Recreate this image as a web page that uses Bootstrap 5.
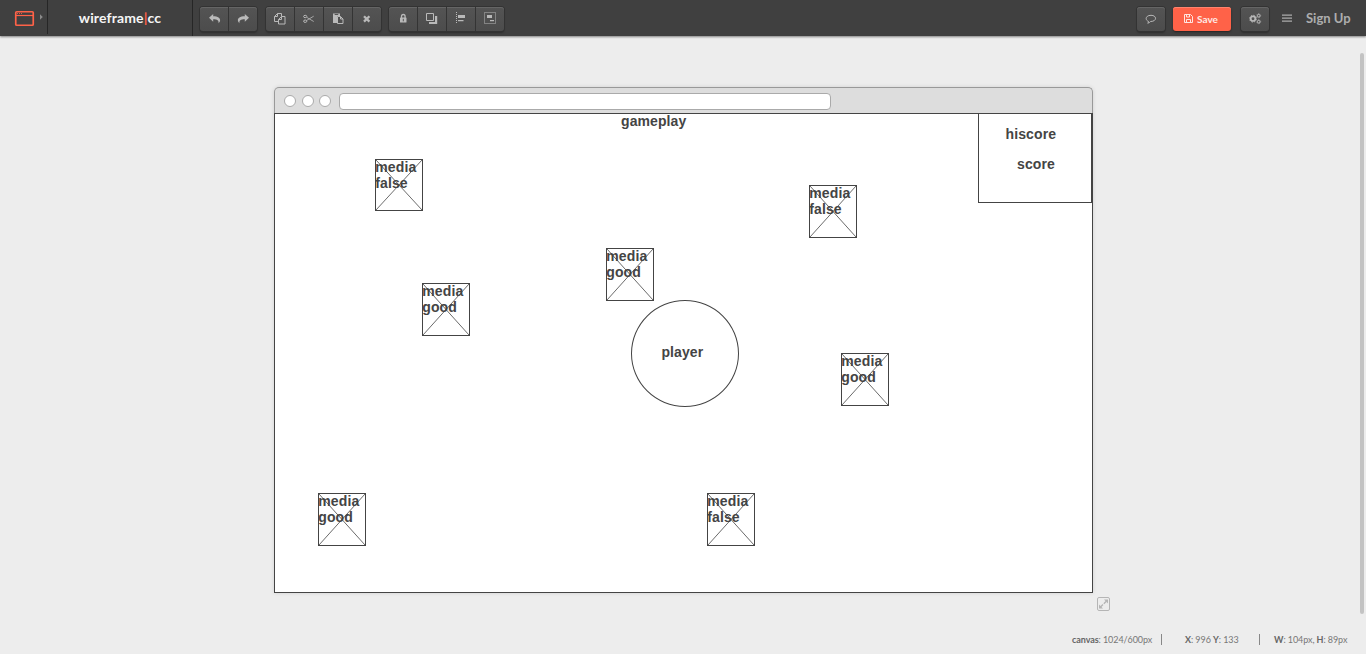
<!DOCTYPE html>
<html lang="en">
<head>
<meta charset="utf-8">
<meta name="viewport" content="width=device-width, initial-scale=1">
<title>wireframe|cc</title>
<link href="https://cdn.jsdelivr.net/npm/bootstrap@5.3.0/dist/css/bootstrap.min.css" rel="stylesheet">
<style>
body{height:654px;background:#ededed;font-family:Lato,sans-serif;overflow:hidden}
.topbar{height:36px;background:#404040;box-shadow:0 1px 2px rgba(0,0,0,.45);flex:none}
.app-menu{width:48px;border-right:1px solid #262626;height:34px}
.brandname{width:145px;height:36px;border-right:1px solid #262626;color:#f5f5f5;font-weight:700;font-size:14px;letter-spacing:.15px;line-height:36px}
.brandname i{color:#ff6248;font-style:normal}
.tools{margin-top:7px;height:24px}
.tools .btn-group{box-shadow:0 0 0 1px #333,0 2px 2px rgba(0,0,0,.3);border-radius:3px;height:24px}
.tool{width:28px;height:24px;padding:0;border:0;background:linear-gradient(#545454,#4c4c4c);box-shadow:inset 0 1px #656565;border-radius:3px;display:block;color:#b9b9b9;line-height:0}
.btn-group>.btn.tool:not(:first-child){margin-left:1px;box-shadow:-1px 0 #343434,inset 0 1px #656565}
.btn-group>.btn.tool{flex:none}
.tool svg,.save svg{display:block}
.solo{box-shadow:0 0 0 1px #333,0 2px 2px rgba(0,0,0,.3),inset 0 1px #656565}
.save{width:58px;height:24px;padding:0;border:0;border-radius:3px;background:#ff6248;color:#ffe9e5;font-size:10px;font-weight:700;box-shadow:0 1px 2px #222,inset 0 1px #ff836e;line-height:25px}
.save:hover{background:#ff6248;color:#fff}
.signup{width:44px;white-space:nowrap;color:#adadad;font-size:13px;font-weight:700;line-height:36px;text-decoration:none}
.window-frame{width:819px;margin:51px 0 0 274px;box-shadow:0 0 4px rgba(0,0,0,.12);border-radius:5px 5px 0 0}
.window-head{height:26px;background:#ddd;border:1px solid #999;border-bottom:0;border-radius:5px 5px 0 0;padding-left:9px}
.dot{width:12px;height:12px;border:1px solid #aaa;border-radius:50%;background:#fff;margin-right:5.5px;margin-top:1px}
.address{width:492px;height:17px;border:1px solid #aaa;border-radius:4px;background:#fff;margin-left:2px;margin-top:2px}
.sheet{height:480px;background:#fff;border:1px solid #444;font:bold 14px/16px "Liberation Sans",Arial,sans-serif;letter-spacing:.1px;color:#444}
.sheet>*{position:absolute}
.media-box{width:48px;height:53px;border:1px solid #444}
.media-box svg{position:absolute;left:0;top:0;width:100%;height:100%}
.media-box span{position:absolute;left:-.7px;top:-1px}
.player{width:108px;height:107px;border:1px solid #444;border-radius:50%}
.panel{width:114px;height:90px;border:1px solid #444}
.resize{position:absolute;left:1097px;top:597px}
.scroller{position:absolute;left:1360px;top:53px;width:4px;height:561px;background:#c3c3c3;border-radius:2px}
.status{height:12px;margin:auto 20px 8px auto;font-size:9px;letter-spacing:-.08px;line-height:12px;color:#777}
.status b{font-weight:700;color:#666}
.status div+div{border-left:1px solid #888;height:11px;line-height:12px}
</style>
</head>
<body class="d-flex flex-column position-relative">
<nav class="topbar d-flex">
  <div class="app-menu">
    <svg width="47" height="34" fill="none" stroke="#ff6248"><rect x="15.75" y="11.75" width="17.5" height="13.5" rx="1" stroke-width="1.7"/><path d="M15 15.500H34" stroke-width="1.2"/><path d="M17 13.500h1m1 0h1m1 0h1" stroke-width="1" opacity=".8"/><path d="M40 14.300v5.400l2.800-2.700z" fill="#8a8a8a" stroke="none"/></svg>
  </div>
  <div class="brandname text-center">wireframe<i>|</i>cc</div>
  <div class="tools d-flex" style="margin-left:7px">
    <div class="btn-group">
      <button class="btn tool" aria-label="Undo"><svg width="28" height="24" fill="currentColor"><path d="M9 10.800 13.200 7v2.300c4.800 0 7.200 1.900 6.900 4.300-.1 1-.7 1.900-1.600 2.600.5-2.700-1.100-3.900-5.300-3.900v2.400z"/></svg></button>
      <button class="btn tool" aria-label="Redo"><svg width="28" height="24" fill="currentColor"><path d="M20 10.800 15.800 7v2.300C11 9.300 8.600 11.200 8.900 13.600c.1 1 .7 1.900 1.600 2.600-.5-2.700 1.100-3.900 5.300-3.900v2.400z"/></svg></button>
    </div>
    <div class="btn-group" style="margin-left:9px">
      <button class="btn tool" aria-label="Copy"><svg width="28" height="24" fill="none" stroke="currentColor"><path d="M13 14.500H8.500V9.500l3-3H15.500V9M11.500 6.500v3h-3M15.500 9.500h3.500v7.500h-6.500v-4.500zM15.500 9.500v3h-3"/></svg></button>
      <button class="btn tool" aria-label="Cut"><svg width="28" height="24" fill="none" stroke="currentColor"><ellipse cx="10.200" cy="9.500" rx="1.600" ry="1.200"/><ellipse cx="10.200" cy="14.200" rx="1.600" ry="1.200"/><path d="m11.700 10.300 7 4.200M11.700 13.400l7-4.200" stroke-width="1" opacity=".8"/></svg></button>
      <button class="btn tool" aria-label="Paste"><svg width="28" height="24"><path d="M9 6.500h7v2.500h-3v7H9z" fill="currentColor"/><path d="M10.700 7.500h3.500" stroke="#555"/><path d="M13.500 9.500h3l2.500 2.500v4.500h-5.500zM16.500 9.500V12H19" fill="none" stroke="currentColor"/></svg></button>
      <button class="btn tool" aria-label="Delete"><svg width="28" height="24"><path d="m11 9.200 5.400 5.400M16.400 9.200 11 14.600" stroke="currentColor" stroke-width="2.300"/></svg></button>
    </div>
    <div class="btn-group" style="margin-left:8px">
      <button class="btn tool" aria-label="Lock"><svg width="28" height="24"><path d="M12.500 11V9.500a1.800 2 0 0 1 3.600 0V11" fill="none" stroke="currentColor" stroke-width="1.300"/><rect x="11" y="10.500" width="6.500" height="5" rx=".6" fill="currentColor"/><path d="M14.300 11.800v2.500" stroke="#555"/></svg></button>
      <button class="btn tool" aria-label="Arrange"><svg width="28" height="24"><path d="M8.500 6.500h7v7h-7z" fill="none" stroke="currentColor"/><path d="M17 9h2.200v8H11v-2h6z" fill="currentColor"/></svg></button>
      <button class="btn tool" aria-label="Align"><svg width="28" height="24"><path d="M9.500 5v12" stroke="currentColor" stroke-dasharray="1 1"/><path d="M11 8h7v3h-7zM11 13h5.500v1.200H11z" fill="currentColor"/></svg></button>
      <button class="btn tool" aria-label="Group"><svg width="28" height="24"><rect x="8.500" y="5.500" width="11" height="11" fill="none" stroke="currentColor" stroke-dasharray="1 1"/><path d="M11 8h5v3h-5zM14 13h4v1.200h-4z" fill="currentColor"/></svg></button>
    </div>
  </div>
  <div class="tools d-flex ms-auto">
    <button class="btn tool solo" aria-label="Comments"><svg width="28" height="24" fill="none" stroke="currentColor"><path d="M11.500 14.400C7.800 13.100 8.400 8.300 14 8.300c6.100 0 6.100 6.200-.4 6.200-.8 1-1.700 1.500-2.900 1.700.5-.5.800-1 .8-1.800z"/></svg></button>
    <button class="btn save d-flex" style="margin-left:8px"><svg width="24" height="24" fill="none" stroke="#ffe5e0"><path d="M11.500 7.500h6l2 2v6h-8zM13.500 7.500v2.500h3V7.500M13.500 15.500v-3h4v3"/></svg>Save</button>
    <button class="btn tool solo" style="margin-left:10px" aria-label="Settings"><svg width="28" height="24" fill="none" stroke="currentColor"><circle cx="12" cy="11.700" r="2.300" stroke-width="1.700"/><circle cx="12" cy="11.700" r="3.400" stroke-width="1" stroke-dasharray="1.340 1.330"/><circle cx="17.700" cy="8.700" r="1.300"/><circle cx="17.700" cy="14.700" r="1.300"/><circle cx="17.700" cy="8.700" r="2" stroke-width=".7" stroke-dasharray=".8 .77"/><circle cx="17.700" cy="14.700" r="2" stroke-width=".7" stroke-dasharray=".8 .77"/></svg></button>
    <svg style="margin-left:13px" width="10" height="24"><path d="M0 8.100h10M0 11.100h10M0 14.100h10" stroke="#aaa" stroke-width="1.300"/></svg>
  </div>
  <a class="signup" href="#" style="margin:0 16px 0 14px">Sign Up</a>
</nav>

<main class="window-frame position-relative">
  <div class="window-head d-flex align-items-center"><i class="dot"></i><i class="dot"></i><i class="dot"></i><div class="address"></div></div>
  <div class="sheet position-relative">
    <span style="left:346px;top:-1px">gameplay</span>
    <div class="panel" style="left:703px;top:-1px"></div>
    <span style="left:730.6px;top:12px">hiscore</span>
    <span style="left:742px;top:42px">score</span>
    <div class="media-box" style="left:100px;top:45px;height:52px"><svg viewBox="0 0 46 51" preserveAspectRatio="none"><path d="M0 0 46 51M46 0 0 51" stroke="#444" stroke-width=".8"/></svg><span>media<br>false</span></div>
    <div class="media-box" style="left:534px;top:71px"><svg viewBox="0 0 46 51" preserveAspectRatio="none"><path d="M0 0 46 51M46 0 0 51" stroke="#444" stroke-width=".8"/></svg><span>media<br>false</span></div>
    <div class="media-box" style="left:331px;top:134px"><svg viewBox="0 0 46 51" preserveAspectRatio="none"><path d="M0 0 46 51M46 0 0 51" stroke="#444" stroke-width=".8"/></svg><span>media<br>good</span></div>
    <div class="media-box" style="left:147px;top:169px"><svg viewBox="0 0 46 51" preserveAspectRatio="none"><path d="M0 0 46 51M46 0 0 51" stroke="#444" stroke-width=".8"/></svg><span>media<br>good</span></div>
    <div class="media-box" style="left:566px;top:239px"><svg viewBox="0 0 46 51" preserveAspectRatio="none"><path d="M0 0 46 51M46 0 0 51" stroke="#444" stroke-width=".8"/></svg><span>media<br>good</span></div>
    <div class="media-box" style="left:43px;top:379px"><svg viewBox="0 0 46 51" preserveAspectRatio="none"><path d="M0 0 46 51M46 0 0 51" stroke="#444" stroke-width=".8"/></svg><span>media<br>good</span></div>
    <div class="media-box" style="left:432px;top:379px"><svg viewBox="0 0 46 51" preserveAspectRatio="none"><path d="M0 0 46 51M46 0 0 51" stroke="#444" stroke-width=".8"/></svg><span>media<br>false</span></div>
    <div class="player" style="left:356px;top:186px"></div>
    <span style="left:386.4px;top:230px">player</span>
  </div>
</main>

<svg class="resize" width="13" height="14"><rect x=".5" y=".5" width="12" height="13" rx="1.500" fill="none" stroke="#b5b5b5"/><path d="M7 2.500h4v4zM2 7.500v4h4z" fill="#b5b5b5"/><path d="m3.500 10 6-6" stroke="#b5b5b5" stroke-width="1.300" stroke-dasharray="3.500 1.200"/></svg>
<div class="scroller"></div>

<footer class="status d-flex">
  <div style="width:89px">
<b>canvas</b>: 1024/600px</div>
  <div style="width:98px;padding-left:23px"><b>X</b>: 996 <b>Y</b>: 133</div>
  <div style="width:87px;padding-left:14px;white-space:nowrap"><b>W</b>: 104px, <b>H</b>: 89px</div>
</footer>
<script src="https://cdn.jsdelivr.net/npm/bootstrap@5.3.0/dist/js/bootstrap.bundle.min.js"></script>
</body>
</html>
